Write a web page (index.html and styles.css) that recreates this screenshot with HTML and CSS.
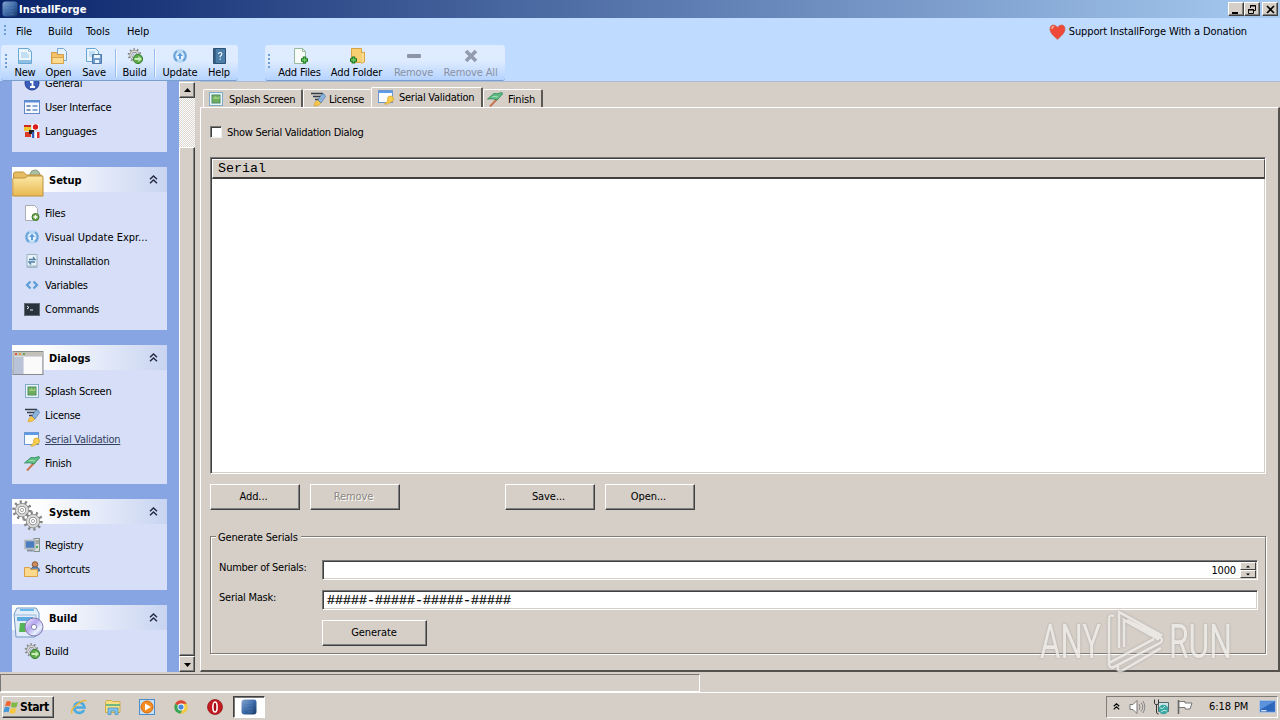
FILE: index.html
```html
<!DOCTYPE html>
<html lang="en">
<head>
<meta charset="utf-8">
<title>InstallForge</title>
<link rel="stylesheet" href="styles.css">
</head>
<body>
<svg class="defs" width="0" height="0">
  <defs>
    <linearGradient id="gBlue" x2="1" y2="1"><stop stop-color="#86a8cf"/><stop offset=".5" stop-color="#3d6aa8"/><stop offset="1" stop-color="#183868"/></linearGradient>
    <linearGradient id="gFold" x2="0" y2="1"><stop stop-color="#fbe7a5"/><stop offset="1" stop-color="#e9b951"/></linearGradient>
    <linearGradient id="gDisc" x2="1" y2="1"><stop stop-color="#f8f4ff"/><stop offset=".4" stop-color="#b5a5ee"/><stop offset=".7" stop-color="#e8f2ff"/><stop offset="1" stop-color="#8d80cf"/></linearGradient>
    <symbol id="gear" viewBox="0 0 16 16"><circle cx="8" cy="8" r="6.500" fill="none" stroke="#858585" stroke-width="2.600" stroke-dasharray="1.700 2.384"/><circle cx="8" cy="8" r="4.200" fill="none" stroke="#858585" stroke-width="3"/><circle cx="8" cy="8" r="4.200" fill="none" stroke="#d8d8d6" stroke-width="1.800"/><circle cx="8" cy="8" r="1.300" fill="none" stroke="#9b9b9b" stroke-width=".7"/></symbol>
    <symbol id="app" viewBox="0 0 16 16"><rect x=".5" y=".5" width="15" height="15" rx="3" fill="url(#gBlue)"/><path d="M4 4h8M4 7h8M5 10h7M7 13h5" stroke="#6f96c5" opacity=".4"/></symbol>
    <symbol id="new" viewBox="0 0 16 16"><path d="M1.500.5h10l3 3v12h-13z" fill="#eaf5fd" stroke="#69a7d3"/><path d="M11.500.5v3h3M4 5h6M4 7h8M4 9h8" fill="none" stroke="#9cc8e8"/><path d="M2 12h12v3H2z" fill="#8fc0e4"/></symbol>
    <symbol id="open" viewBox="0 0 16 16"><path d="M6.500.5h6l3 3v9h-9z" fill="#e5f2fc" stroke="#76a7d0"/><path d="M.5 4.500h5l1 2h6v9H.5z" fill="#f3c268" stroke="#d39b43"/><path d="M1 15.500V9.500h11.500v6z" fill="#fbdc91" stroke="#d9a34d"/></symbol>
    <symbol id="save" viewBox="0 0 16 16"><path d="M.5.5h9l3 3v10H.5z" fill="#e8f4fd" stroke="#69a7d3"/><path d="M3 4h6M3 6h6M3 8h4" stroke="#9cc8e8"/><path d="M6.500 6.500h9v9h-9z" fill="#6f9ccc" stroke="#4d7cac"/><path d="M8 7h6v3H8zM9 12h4v3H9z" fill="#edf5fc"/></symbol>
    <symbol id="build" viewBox="0 0 16 16"><use href="#gear" width="15" height="14"/><circle cx="11" cy="11" r="4.600" fill="#5da94b" stroke="#36802c"/><path d="M7.500 10h4V8l3.500 3-3.500 3v-2h-4z" fill="#c8efb8"/></symbol>
    <symbol id="update" viewBox="0 0 16 16"><circle cx="8" cy="8" r="7" fill="#b9d9f5"/><path d="M5 3a6 6 0 0 0 0 10M11 3a6 6 0 0 1 0 10" fill="none" stroke="#6aa4da" stroke-width="2"/><circle cx="8" cy="8" r="3.600" fill="#eef6ff"/><path d="M8 4.500l3 3.500H9v3H7V8H5z" fill="#5c9cdc"/></symbol>
    <symbol id="help" viewBox="0 0 16 16"><path d="M2.500.5h12v15h-12z" fill="#4c7fa8" stroke="#2a5175"/><path d="M4 1v14" stroke="#25425d"/><path d="M7.500 6q0-1.500 1.700-1.500t1.700 1.500q0 1-1.700 2.200v1M9.200 10.500v1.300" fill="none" stroke="#fff" stroke-width="1.100"/></symbol>
    <symbol id="addfile" viewBox="0 0 16 16"><path d="M2.500.5h8l3 3v12h-11z" fill="#f9fcf8" stroke="#94bb9b"/><path d="M10.500.5v3h3" fill="none" stroke="#94bb9b"/><path d="M12.500 8.500v7M9 12h7" stroke="#1c7423" stroke-width="3.400"/><path d="M12.500 9.500v5M10 12h5" stroke="#6fce65" stroke-width="1.400"/></symbol>
    <symbol id="addfolder" viewBox="0 0 16 16"><path d="M2.500.5h10v14h-10z" fill="#f8cf70" stroke="#d9a544"/><path d="M12 5l3.500-1v10l-3 1.500" fill="#fbdc8e" stroke="#d9a544"/><path d="M4.500 8.500v7M1 12h7" stroke="#1c7423" stroke-width="3.400"/><path d="M4.500 9.500v5M2 12h5" stroke="#6fce65" stroke-width="1.400"/></symbol>
    <symbol id="minus" viewBox="0 0 16 16"><rect x="1" y="6" width="14" height="4" rx="1" fill="#8c95a7"/></symbol>
    <symbol id="cross" viewBox="0 0 16 16"><path d="M3 3l10 10M13 3L3 13" stroke="#939caf" stroke-width="3.600"/></symbol>
    <symbol id="info" viewBox="0 0 16 16"><circle cx="8" cy="8" r="7" fill="#3b5dba" stroke="#253f91"/><path d="M6 7h2.500v5M6 12h5M8 3.500v2" fill="none" stroke="#fff" stroke-width="1.800"/></symbol>
    <symbol id="ui" viewBox="0 0 16 16"><rect x=".5" y="1.500" width="15" height="13" fill="#f5f9ff" stroke="#648ac2"/><path d="M1 2.500h14" stroke="#5c8dd6" stroke-width="2"/><path d="M2.500 7h4M2.500 11h4" stroke="#55719c" stroke-width="1.600"/><path d="M8.500 7h5M8.500 11h5" stroke="#89a9d8" stroke-width="2"/></symbol>
    <symbol id="lang" viewBox="0 0 16 16"><rect y="2" width="7" height="6" fill="#efc62f"/><rect y="2" width="7" height="2" fill="#cf2b20"/><rect x="8" y="1" width="7" height="6" fill="#fff"/><circle cx="11.500" cy="4" r="2.700" fill="#da1d1d"/><rect x="1" y="9" width="6" height="5" fill="#db3a24"/><path d="M5 7h5v4H5z" fill="#202020"/><rect x="8" y="9" width="2.500" height="6" fill="#3360be"/><rect x="10.500" y="9" width="2.500" height="6" fill="#fff"/><rect x="13" y="9" width="2.500" height="6" fill="#de3028"/></symbol>
    <symbol id="files" viewBox="0 0 16 16"><path d="M1.500.5h9l3 3v12h-12z" fill="#fff" stroke="#a9adb1"/><circle cx="11.500" cy="12" r="3.500" fill="#69a748" stroke="#407b2c"/><path d="M11.500 10v4M9.500 12h4" stroke="#fff" stroke-width="1.300"/></symbol>
    <symbol id="uninst" viewBox="0 0 16 16"><path d="M3 1.500h10v13H3z" fill="#e8f2f8" stroke="#99b2c4"/><path d="M5 6.500h6L9 4M11 9H5l2 2.500" fill="none" stroke="#4c7da3" stroke-width="1.300"/><path d="M3 13.500h10" stroke="#a9bfcd" stroke-width="2"/></symbol>
    <symbol id="vars" viewBox="0 0 16 16"><path d="M6.500 4.500L3 8l3.500 3.500M9.500 4.500L13 8l-3.500 3.500" fill="none" stroke="#5b9ed6" stroke-width="2.200"/></symbol>
    <symbol id="cmd" viewBox="0 0 16 16"><rect x=".5" y="2.500" width="15" height="12" fill="#29333d" stroke="#626b74"/><path d="M3 5l2 1.500L3 8M6 9h3" fill="none" stroke="#eee"/></symbol>
    <symbol id="splash" viewBox="0 0 16 16"><rect x="1.500" y="1.500" width="13" height="13" fill="#e9f5f8" stroke="#80aac5"/><rect x="4" y="4" width="8" height="8" fill="#6fae5f" stroke="#518c68"/><path d="M4.500 8l3-3 2 2 2-2v3z" fill="#9dce80"/></symbol>
    <symbol id="license" viewBox="0 0 16 16"><path d="M1 2.500h12M3 5.500h9M5 8.500h5" stroke="#343d48" stroke-width="1.500"/><path d="M4 15q0-4 4-6l3 3q-2 3-7 3z" fill="#f5c84c" stroke="#d99b25" stroke-width=".6"/><path d="M8 9l4-6h2l1.500 2.500L11 12z" fill="#8fb4dc" stroke="#4775ac" stroke-width=".7"/></symbol>
    <symbol id="serial" viewBox="0 0 16 16"><rect x=".5" y="1.500" width="14" height="12" fill="#fafdff" stroke="#6c98cf"/><path d="M1 3h13" stroke="#5c9bea" stroke-width="2"/><circle cx="12.500" cy="10" r="3" fill="#f9cf4f" stroke="#d69e2b" stroke-width=".7"/><path d="M10.500 11l-4 4h3l4-2.500" fill="#f9cf4f" stroke="#d69e2b" stroke-width=".7"/></symbol>
    <symbol id="finish" viewBox="0 0 16 16"><path d="M11 7L3 15.500" stroke="#c97650" stroke-width="2"/><path d="M7 2.500q3 1 8-1l.5 1.500L10 9Q6 7 .5 8z" fill="#61bb85" stroke="#258a51" stroke-width=".8"/><path d="M5 6q3-1 6 0" fill="none" stroke="#a4e0b9"/></symbol>
    <symbol id="registry" viewBox="0 0 16 16"><rect x="10" y="1.500" width="5.500" height="13" fill="#d9dddc" stroke="#86908f"/><path d="M11 4h4M11 6h4" stroke="#6d7877"/><circle cx="13" cy="10" r="1.200" fill="#50ae50"/><rect x="1" y="3.500" width="10" height="8" fill="#4a7cc0" stroke="#b5bac0" stroke-width="1.600"/><path d="M3 13.500h6" stroke="#87909d" stroke-width="2"/></symbol>
    <symbol id="shortcut" viewBox="0 0 16 16"><circle cx="11" cy="3.500" r="2.800" fill="#ce8c5d" stroke="#8e5b37"/><path d="M6.500 10q0-4 4.500-4t4.500 4z" fill="#6d8fba" stroke="#45668d"/><path d="M.5 6.500h5l1 2h7v7H.5z" fill="#fbd98c" stroke="#d69f48"/></symbol>
    <symbol id="chev" viewBox="0 0 9 9"><path d="M1 4.200L4.500 1 8 4.200M1 8.200L4.500 5 8 8.200" fill="none" stroke="currentColor" stroke-width="1.500"/></symbol>
    <symbol id="winflag" viewBox="0 0 16 16"><path d="M3.500 2.500q2-1 4.500.5L7 7.500q-2-1.500-5 0z" fill="#ef6532"/><path d="M8.800 3q3 1.500 6.200 0l-1.500 5q-2.500 1-5.500 0z" fill="#82b846"/><path d="M1.500 8.500q3-1.500 5.200 0l-1.200 5q-2-1.500-5 0z" fill="#4598d7"/><path d="M7.800 9q3 1 5.500 0L12 14q-3 1-5.500 0z" fill="#f5c83e"/></symbol>
  </defs>
</svg>

<div class="screen">
  <header class="titlebar">
    <svg class="i16"><use href="#app"/></svg>
    <span class="title">InstallForge</span>
    <div class="winbtns">
      <svg class="cap"><path d="M3 10h6" stroke="#000" stroke-width="2"/></svg>
      <svg class="cap"><path d="M5.500 5V2.500h5v5H9M5 3h6M3.500 6.500h5v4h-5zM3 7h6" fill="none" stroke="#000"/></svg>
      <svg class="cap close"><path d="M4 3l7 7M11 3l-7 7" stroke="#000" stroke-width="1.600"/></svg>
    </div>
  </header>

  <div class="bands">
    <nav class="menubar">
      <i class="grip small"></i>
      <span class="m-file">File</span><span class="m-build">Build</span><span class="m-tools">Tools</span><span>Help</span>
      <div class="donate">
        <svg class="heart" viewBox="0 0 16 16"><path d="M8 15.500C5 12.500.5 9.500.5 5 .5 0 6 0 8 3.500 10 0 15.500 0 15.500 5c0 4.500-4.500 7.500-7.500 10.500z" fill="#ed4838" stroke="#cf5e50" stroke-width=".7"/><path d="M2.500 5q0-2.500 2.200-2.500" fill="none" stroke="#ffa28f" stroke-width="1.500"/></svg>
        <span>Support InstallForge With a Donation</span>
      </div>
    </nav>
    <div class="toolrow">
      <div class="toolbar main-tools">
        <i class="grip"></i>
        <div class="tool w32"><svg class="i16"><use href="#new"/></svg><span>New</span></div>
        <div class="tool w35"><svg class="i16"><use href="#open"/></svg><span>Open</span></div>
        <div class="tool w36"><svg class="i16"><use href="#save"/></svg><span>Save</span></div>
        <i class="sep"></i>
        <div class="tool w33"><svg class="i16"><use href="#build"/></svg><span>Build</span></div>
        <i class="sep"></i>
        <div class="tool w46"><svg class="i16"><use href="#update"/></svg><span>Update</span></div>
        <div class="tool w32"><svg class="i16"><use href="#help"/></svg><span>Help</span></div>
      </div>
      <div class="toolbar file-tools">
        <i class="grip"></i>
        <div class="tool w54"><svg class="i16"><use href="#addfile"/></svg><span>Add Files</span></div>
        <div class="tool w60"><svg class="i16"><use href="#addfolder"/></svg><span>Add Folder</span></div>
        <div class="tool w54 off"><svg class="i16"><use href="#minus"/></svg><span>Remove</span></div>
        <div class="tool w60 off"><svg class="i16"><use href="#cross"/></svg><span>Remove All</span></div>
      </div>
    </div>
  </div>

  <main class="work">
    <aside class="side">
      <section class="group first">
        <ul>
          <li><svg class="i16"><use href="#info"/></svg><span>General</span></li>
          <li><svg class="i16"><use href="#ui"/></svg><span>User Interface</span></li>
          <li><svg class="i16"><use href="#lang"/></svg><span>Languages</span></li>
        </ul>
      </section>
      <section class="group">
        <h2><svg class="i32" viewBox="0 0 32 32"><path d="M18 7q1-4 5-4t5 5v4H18z" fill="#a9c0a4" stroke="#8a9a85"/><path d="M1.500 7q0-2 2-2h8l3 3h14q2 0 2 2v18h-29z" fill="#e7bd63" stroke="#bd903d"/><path d="M.8 29V12q0-1 1-1h11l3-2h14q1.200 0 1.200 1v19z" fill="url(#gFold)" stroke="#bd903d"/></svg><span>Setup</span><svg class="chev"><use href="#chev"/></svg></h2>
        <ul>
          <li><svg class="i16"><use href="#files"/></svg><span>Files</span></li>
          <li><svg class="i16"><use href="#update"/></svg><span class="long">Visual Update Expr...</span></li>
          <li><svg class="i16"><use href="#uninst"/></svg><span>Uninstallation</span></li>
          <li><svg class="i16"><use href="#vars"/></svg><span>Variables</span></li>
          <li><svg class="i16"><use href="#cmd"/></svg><span>Commands</span></li>
        </ul>
      </section>
      <section class="group">
        <h2><svg class="i32" viewBox="0 0 32 32"><rect x="1" y="6.500" width="30" height="23" fill="#d7dae0" stroke="#898b90"/><rect x="1.500" y="7" width="29" height="4" fill="#c3c1b8"/><path d="M3 9h2" stroke="#db5744" stroke-width="2"/><path d="M7 9h2" stroke="#dda23a" stroke-width="2"/><path d="M11 9h2" stroke="#6aa454" stroke-width="2"/><path d="M2 12h9v17H2z" fill="#b9c3d7"/><path d="M12 12h18v17H12z" fill="#fafafa"/></svg><span>Dialogs</span><svg class="chev"><use href="#chev"/></svg></h2>
        <ul>
          <li><svg class="i16"><use href="#splash"/></svg><span>Splash Screen</span></li>
          <li><svg class="i16"><use href="#license"/></svg><span>License</span></li>
          <li class="current"><svg class="i16"><use href="#serial"/></svg><span>Serial Validation</span></li>
          <li><svg class="i16"><use href="#finish"/></svg><span>Finish</span></li>
        </ul>
      </section>
      <section class="group">
        <h2><svg class="i32" viewBox="0 0 32 32"><use href="#gear" x="0" y="1" width="20" height="20"/><use href="#gear" x="11" y="12" width="20" height="20"/></svg><span>System</span><svg class="chev"><use href="#chev"/></svg></h2>
        <ul>
          <li><svg class="i16"><use href="#registry"/></svg><span>Registry</span></li>
          <li><svg class="i16"><use href="#shortcut"/></svg><span>Shortcuts</span></li>
        </ul>
      </section>
      <section class="group">
        <h2><svg class="i32" viewBox="0 0 32 32"><path d="M2 9l3-6h19l3 5v18l-4 6H4z" fill="#e1edf8" stroke="#7197c3"/><path d="M2 10h22v20" fill="none" stroke="#9ab9da"/><path d="M5 12h16v4H5z" fill="#60aae2"/><path d="M8 5h14" stroke="#69b8ee" stroke-width="2"/><path d="M8 18h5v9H7z" fill="#53b554"/><path d="M13 18h5v9h-5z" fill="#ed9b50"/><circle cx="22" cy="22" r="9" fill="url(#gDisc)" stroke="#8278b3"/><circle cx="22" cy="22" r="2.600" fill="#fff" stroke="#8582ad"/></svg><span>Build</span><svg class="chev"><use href="#chev"/></svg></h2>
        <ul><li><svg class="i16"><use href="#build"/></svg><span>Build</span></li></ul>
      </section>
    </aside>

    <div class="scroll">
      <svg class="arrow"><path d="M4 9h7L7.500 5z"/></svg>
      <div class="track"></div>
      <div class="thumb"></div>
      <svg class="arrow"><path d="M4 6h7l-3.500 4z"/></svg>
    </div>

    <div class="content">
      <div class="tabs">
        <div class="tab t1"><svg class="i16"><use href="#splash"/></svg><span>Splash Screen</span></div>
        <div class="tab t2"><svg class="i16"><use href="#license"/></svg><span>License</span></div>
        <div class="tab t3 active"><svg class="i16"><use href="#serial"/></svg><span>Serial Validation</span></div>
        <div class="tab t4"><svg class="i16"><use href="#finish"/></svg><span>Finish</span></div>
      </div>
      <div class="page">
        <div class="check"><i class="box"></i><span>Show Serial Validation Dialog</span></div>
        <div class="list"><div class="colhead">Serial</div></div>
        <div class="actions">
          <div class="btn">Add...</div><div class="btn disabled">Remove</div><div class="btn save">Save...</div><div class="btn">Open...</div>
        </div>
        <section class="fieldset">
          <div class="legend">Generate Serials</div>
          <div class="row"><span class="lbl">Number of Serials:</span>
            <div class="input num"><span>1000</span><div class="spin"><svg><path d="M5 4.500h4l-2-2z"/></svg><svg><path d="M5 2.500h4l-2 2z"/></svg></div></div>
          </div>
          <div class="row"><span class="lbl">Serial Mask:</span><div class="input mono">#####-#####-#####-#####</div></div>
          <div class="btn gen">Generate</div>
        </section>
      </div>
    </div>
  </main>

  <footer class="status"><div class="cell"></div></footer>

  <footer class="taskbar">
    <div class="start"><svg class="flag"><use href="#winflag"/></svg><span>Start</span></div>
    <div class="quick">
      <svg viewBox="0 0 16 16"><path d="M13 11A5.200 5.200 0 1 1 13.500 8.500H4" fill="none" stroke="#4aabe2" stroke-width="2.700"/><path d="M1 14.500Q-1 11 6 5.500T15.500 2" fill="none" stroke="#edb93c" stroke-width="1.500"/></svg>
      <svg viewBox="0 0 16 16"><path d="M.5 3.500l1-2h5l1 1h7.500v11H.5z" fill="#f6df83" stroke="#d1ac48"/><path d="M1 6h14" stroke="#70b781" stroke-width="2"/><path d="M3 15.500V9h10v6.500h-3V12H6v3.500z" fill="#82c3ed" stroke="#4c91c2" stroke-width=".8"/></svg>
      <svg viewBox="0 0 16 16"><rect x=".5" y=".5" width="15" height="15" fill="#c6e1f7" stroke="#4b8dc9"/><circle cx="8" cy="8" r="6" fill="#f48c20" stroke="#d56a0a"/><path d="M6 4.500l6 3.500-6 3.500z" fill="#fff"/></svg>
      <svg viewBox="0 0 16 16"><circle cx="8" cy="8" r="6.700" fill="#f2ca3e"/><path d="M8 8L2.200 4.700A6.700 6.700 0 0 1 13.800 4.700H8z" fill="#dc463a"/><path d="M2.200 4.700A6.700 6.700 0 0 0 7.500 14.700L10 9z" fill="#3aa45a"/><circle cx="8" cy="8" r="3.500" fill="#fff"/><circle cx="8" cy="8" r="2.600" fill="#4b87db"/></svg>
      <svg viewBox="0 0 16 16"><circle cx="8" cy="8" r="7.500" fill="#c31920" stroke="#8f1014" stroke-width=".7"/><ellipse cx="8" cy="8" rx="2.100" ry="5" fill="#a80c13" stroke="#fff" stroke-width="1.600"/></svg>
    </div>
    <div class="running"><svg class="i16"><use href="#app"/></svg></div>
    <div class="tray">
      <svg class="traychev"><use href="#chev"/></svg>
      <svg class="i16"><path d="M1 5.500h3l4-4v13l-4-4H1z" fill="#fff" stroke="#777"/><path d="M10 5q2 3 0 6M12 3.500q3.500 4.500 0 9M14 2q3.500 6 0 12" fill="none" stroke="#888"/></svg>
      <svg class="i16"><path d="M5.500 3.500h10v9h-10z" fill="#cfe4e6" stroke="#536b6e"/><path d="M1.500.5v4q0 1 2 1t2-1v-4M3.500 5.500V13q0 2 2 2" fill="none" stroke="#333"/><circle cx="10.500" cy="10.500" r="4.800" fill="#3ba7a5"/><path d="M7 9q3 2 5-2M8 13q3-3 6-1" fill="none" stroke="#b8eae0"/></svg>
      <svg class="i16 wide"><path d="M1.500 1v14" stroke="#666" stroke-width="1.600"/><path d="M2 2.500h6v1.500h7l-2 6H8V8.500H2z" fill="#fff" stroke="#777"/></svg>
      <span class="clock">6:18 PM</span>
      <svg class="desk" viewBox="0 0 16 13"><rect x=".5" y=".5" width="15" height="11" fill="#2d66bd" stroke="#adc4e3"/><path d="M1 1h14L1 9z" fill="#5b94dc"/><path d="M2 10h5" stroke="#fff"/></svg>
    </div>
  </footer>

  <svg class="watermark" viewBox="0 0 210 66">
    <g class="wmtext"><text x="3" y="51" textLength="61" lengthAdjust="spacingAndGlyphs">ANY</text><text x="132" y="51" textLength="63" lengthAdjust="spacingAndGlyphs">RUN</text></g>
    <path d="M77 9q-5-2-5 3v44l45-24M82 41V5l42 23-3 4-34-19v27M72 57q1 5 5 3l46-24q4-3 0-6L90 13M81 58v5q2 2 5 0l38-22" fill="none" stroke="#f1efed" stroke-width="2.600"/>
  </svg>
</div>
</body>
</html>
```
FILE: styles.css
```css
* { box-sizing: border-box; }
body { margin: 0; overflow: hidden; background: #d5cfc8; }
.defs { display: block; height: 0; position: absolute; }
svg { display: block; flex: none; }
i { display: block; flex: none; }
span { white-space: nowrap; }
.screen {
  position: relative; width: 1280px; height: 720px; display: flex; flex-direction: column; overflow: hidden;
  font: 11px/14px "DejaVu Sans Condensed", "DejaVu Sans", sans-serif; font-stretch: condensed; letter-spacing: -.33px; color: #000;
}
.i16 { width: 16px; height: 16px; overflow: visible; }

.titlebar { height: 18px; flex: none; display: flex; align-items: center; padding: 0 2px; background: linear-gradient(90deg, #0a246a, #a6caf0); }
.title { margin-left: 1px; padding-top: 1px; color: #fff; font-weight: bold; letter-spacing: .08px; }
.winbtns { margin-left: auto; display: flex; }
.cap { width: 16px; height: 14px; background: #d5cfc8; border: 1px solid; border-color: #fff #404040 #404040 #fff; box-shadow: inset -1px -1px #808080; }
.close { margin-left: 2px; }

.bands { height: 63px; flex: none; background: #bfdbff; display: flex; flex-direction: column; }
.menubar { height: 27px; display: flex; align-items: center; padding: 1px 0 0 4px; letter-spacing: -.1px; }
.grip { width: 2px; height: 15px; background: repeating-linear-gradient(180deg, #6f9dd9 0 2px, transparent 2px 4px); margin: 9px 0 0 4px; align-self: flex-start; }
.grip.small { height: 10px; margin: 6px 10px 0 0; }
.m-file { width: 32px; }
.m-build { width: 38px; }
.m-tools { width: 41px; }
.donate { margin-left: auto; margin-right: 33px; display: flex; align-items: center; gap: 3px; letter-spacing: -.12px; }
.heart { width: 17px; height: 16px; }
.toolrow { display: flex; height: 36px; }
.toolbar { height: 36px; display: flex; background: linear-gradient(180deg, #dfecff 0 45%, #d3e5ff 60%, #b5d3ff); border-bottom: 1px solid #779fd0; border-radius: 3px; }
.main-tools { width: 237px; margin-left: 1px; }
.file-tools { width: 240px; margin-left: 27px; }
.file-tools .grip { margin-left: 3px; margin-right: 2px; }
.main-tools .grip { margin-right: 2px; }
.tool { height: 35px; padding-top: 3px; display: flex; flex-direction: column; align-items: center; gap: 2px; letter-spacing: -.15px; }
.off { color: #8991a3; }
.w32 { width: 32px; } .w33 { width: 33px; } .w35 { width: 35px; } .w36 { width: 36px; } .w46 { width: 46px; }
.w54 { width: 55px; } .w60 { width: 59px; }
.sep { width: 1px; height: 28px; margin: 4px 2px 0 3px; background: #99bdea; box-shadow: 1px 0 #f1f7ff; }

.work { flex: none; height: 591px; display: flex; }
.side { width: 179px; padding: 0 12px; overflow: hidden; background: #87a5e3; display: flex; flex-direction: column; gap: 15px; }
.group { width: 155px; flex: none; background: #d6dff7; letter-spacing: -.27px; }
.group.first { margin-top: -19px; }
.group h2 { margin: 0; height: 25px; display: flex; align-items: flex-start; font: bold 11px/27px "DejaVu Sans Condensed", "DejaVu Sans", sans-serif; font-stretch: condensed; letter-spacing: 0; background: linear-gradient(90deg, #fff 0 15%, #c8d4f1); }
.group h2 span { margin-left: 5px; }
.i32 { width: 32px; height: 32px; overflow: visible; }
.chev { width: 9px; height: 9px; margin: 8px 9px 0 auto; color: #252b42; }
.group ul { list-style: none; margin: 0; padding: 9px 12px; }
.group li { height: 24px; display: flex; align-items: center; gap: 5px; }
.group li span { padding-top: 2px; }
.long { letter-spacing: 0; }
.current { text-decoration: underline; color: #33405f; }

.scroll { width: 16px; padding-top: 1px; display: flex; flex-direction: column; }
.arrow { width: 16px; height: 16px; background: #d5cfc8; border: 1px solid; border-color: #fff #404040 #404040 #fff; box-shadow: inset -1px -1px #808080; }
.track { height: 49px; background: repeating-conic-gradient(#fff 0 25%, #d9d4ce 0 50%) 0 0 / 2px 2px; }
.thumb { height: 509px; background: #d5cfc8; border: 1px solid; border-color: #fff #404040 #404040 #fff; box-shadow: inset -1px -1px #808080; }

.content { width: 1080px; margin-left: 5px; display: flex; flex-direction: column; border-top: 1px solid #aebbd0; }
.tabs { height: 25px; padding-left: 3px; display: flex; align-items: flex-end; }
.tab { height: 18px; display: flex; align-items: center; gap: 5px; border: 1px solid #fff; border-bottom: 0; border-right: 2px solid #5d5955; border-radius: 2px 2px 0 0; }
.tab span { padding-top: 2px; }
.t1 { width: 100px; padding-left: 4px; letter-spacing: -.28px; }
.t2 { width: 68px; padding-left: 6px; gap: 3px; border-right: 0; }
.t3 { width: 112px; letter-spacing: -.27px; }
.t4 { width: 60px; padding-left: 3px; letter-spacing: -.15px; }
.tab.active { height: 21px; margin-bottom: -1px; background: #d5cfc8; padding: 0 0 2px 6px; }
.page { height: 565px; padding: 17px 12px 0 9px; border: 1px solid #fff; border-right: 2px solid #55514d; border-bottom: 2px solid #55514d; display: flex; flex-direction: column; }
.check { height: 14px; display: flex; align-items: center; gap: 5px; letter-spacing: -.27px; }
.check span { padding-top: 1px; }
.box { width: 12px; height: 12px; background: #fff; border: 1px solid; border-color: #777 #eee #eee #777; box-shadow: inset 1px 1px #404040; }
.list { height: 317px; margin-top: 18px; background: #fff; border: 1px solid; border-color: #777 #fff #fff #777; box-shadow: inset 1px 1px #404040, inset -1px -1px #d5cfc8; padding: 1px 0 1px 1px; }
.colhead { height: 20px; padding: 1px 5px; background: #d5cfc8; border: 1px solid; border-color: #fff #55514d #404040 #fff; border-bottom-width: 2px; font: 13.33px/16px "Liberation Mono", monospace; letter-spacing: 0; }
.actions { display: flex; gap: 10px; margin-top: 10px; }
.btn { width: 90px; height: 26px; display: flex; align-items: center; justify-content: center; padding: 0 3px 1px 0; letter-spacing: -.07px; border: 1px solid; border-color: #fff #404040 #404040 #fff; box-shadow: inset -1px -1px #808080; }
.disabled { color: #8b8680; text-shadow: 1px 1px #fff; }
.save { margin-left: 95px; }
.fieldset { height: 118px; margin-top: 26px; border: 1px solid #817c76; box-shadow: 1px 1px #fff, inset 1px 1px #fff; padding: 0 7px 0 8px; display: flex; flex-direction: column; }
.legend { width: 85px; height: 14px; margin: -6px 0 0 -3px; padding: 0 2px; background: #d5cfc8; white-space: nowrap; letter-spacing: -.18px; }
.row { height: 30px; display: flex; align-items: flex-start; }
.row:nth-child(2) { margin-top: 15px; }
.lbl { width: 103px; letter-spacing: -.25px; padding-top: 1px; }
.input { flex: 1; height: 20px; background: #fff; border: 1px solid; border-color: #777 #fff #fff #777; box-shadow: inset 1px 1px #404040, inset -1px -1px #d5cfc8; }
.num { display: flex; justify-content: flex-end; align-items: center; gap: 4px; }
.num span { letter-spacing: -.15px; padding-top: 1px; }
.mono { padding: 1px 4px; font: 13.33px/17px "Liberation Mono", monospace; letter-spacing: 0; -webkit-text-stroke: .2px #000; }
.spin { width: 17px; display: flex; flex-direction: column; padding: 1px 1px 1px 0; }
.spin svg { width: 16px; height: 8px; background: #d5cfc8; border: 1px solid; border-color: #fff #404040 #404040 #fff; }
.gen { width: 105px; height: 26px; margin: 0 0 0 103px; padding-right: 1px; }

.status { height: 21px; flex: none; padding-top: 2px; border-bottom: 1px solid #fff; }
.cell { width: 700px; height: 18px; border: 1px solid; border-color: #777 #fff #fff #777; }
.taskbar { height: 27px; flex: none; display: flex; align-items: center; padding-left: 2px; }
.start { width: 52px; height: 22px; display: flex; align-items: center; gap: 1px; padding-left: 0; font-weight: bold; font-size: 12px; letter-spacing: -.4px; border: 1px solid; border-color: #fff #404040 #404040 #fff; box-shadow: inset -1px -1px #808080; }
.flag { width: 16px; height: 16px; }
.quick { display: flex; gap: 18px; margin-left: 17px; }
.quick svg { width: 16px; height: 16px; }
.running { width: 32px; height: 22px; margin-left: 10px; display: flex; align-items: center; justify-content: center; background: #fff; border: 1px solid; border-color: #404040 #fff #fff #404040; box-shadow: inset 1px 1px #777; }
.tray { width: 172px; height: 22px; margin: 0 2px 0 auto; padding: 0 1px 0 6px; display: flex; align-items: center; border: 1px solid; border-color: #817c76 #fff #fff #817c76; }
.traychev { width: 7px; height: 9px; margin-right: 9px; }
.tray .i16 { margin-right: 8px; }
.tray .wide { margin-right: 16px; }
.clock { width: 51px; letter-spacing: -.08px; padding-top: 1px; }
.desk { width: 17px; height: 14px; }

.watermark { position: absolute; left: 1037px; top: 607px; width: 210px; height: 66px; opacity: .75; filter: drop-shadow(0 0 1px #9a958f); }
.wmtext { font: 400 49px Roboto, sans-serif; fill: #f3f1ee; letter-spacing: 0; }
```
